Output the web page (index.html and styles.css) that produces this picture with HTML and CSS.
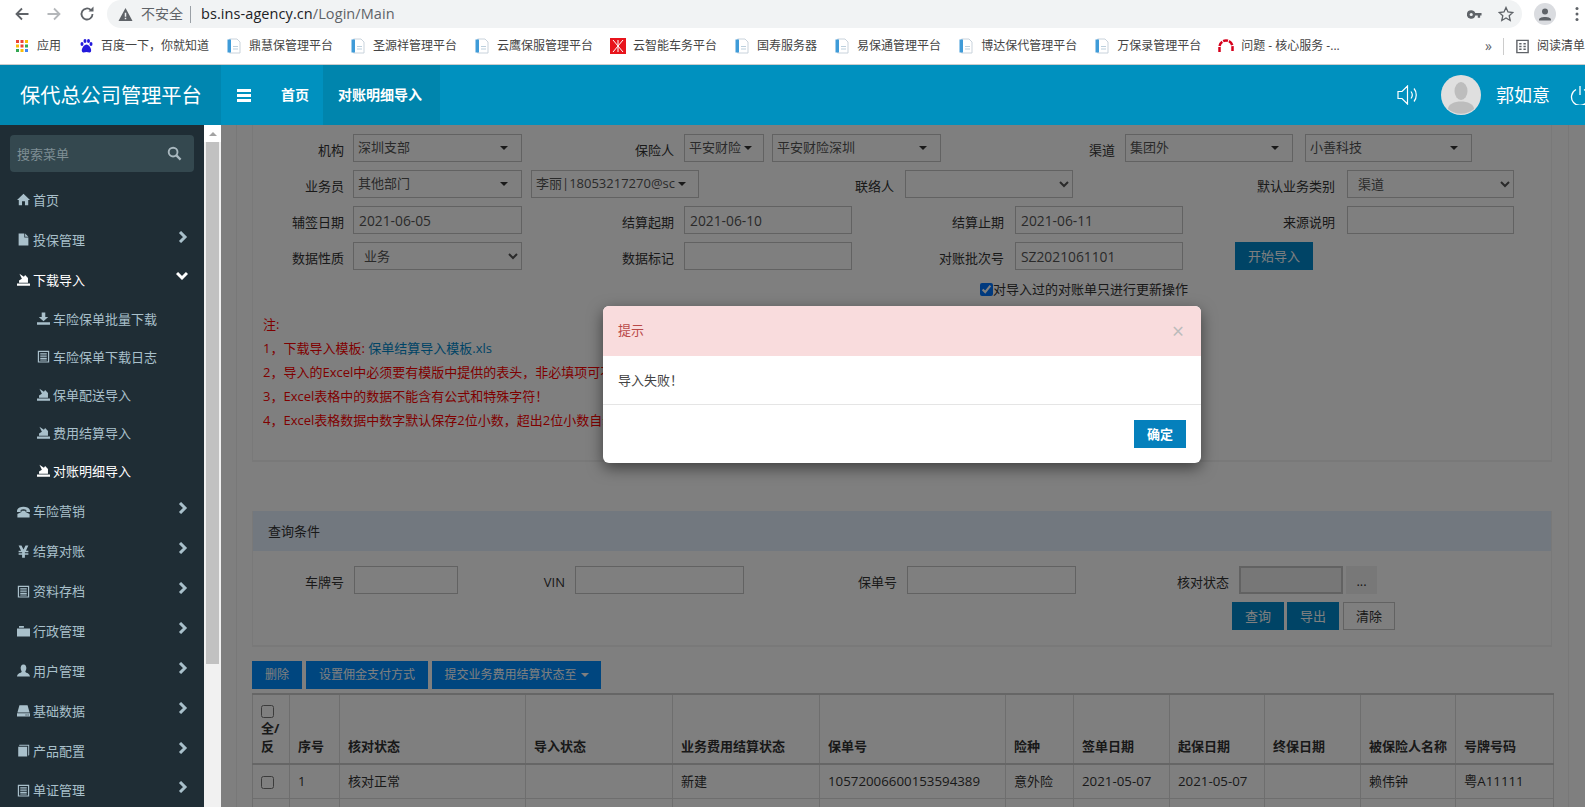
FILE: index.html
```html
<!DOCTYPE html>
<html lang="zh-CN">
<head>
<meta charset="utf-8">
<title>保代总公司管理平台</title>
<link rel="stylesheet" href="styles.css">
</head>
<body>
<svg class="sprite" xmlns="http://www.w3.org/2000/svg">
  <symbol id="i-home" viewBox="0 0 16 16"><path d="M8 1 16 8.500H13.800V15H9.800V10.200H6.200V15H2.200V8.500H0Z"/></symbol>
  <symbol id="i-file" viewBox="0 0 16 16"><path d="M2 .5H9V5.500H14V15.500H2ZM10 .5 14 4.500H10Z"/></symbol>
  <symbol id="i-import" viewBox="0 0 16 16"><path d="M0 13H16V15.800H0ZM2.500 12V9.300L6 7 3 1 8.500 4.500 10 2.500 13.500 6V12Z"/></symbol>
  <symbol id="i-down" viewBox="0 0 16 16"><path d="M5.800 .5H10.200V6H13.800L8 11.500 2.200 6H5.800ZM0 12.500H16V15.800H0Z"/></symbol>
  <symbol id="i-list" viewBox="0 0 16 16"><path fill-rule="evenodd" d="M1 1H15V15.500H1ZM2.500 2.500V14H13.500V2.500Z"/><path d="M4 4H12V5.500H4ZM4 6.800H12V8.300H4ZM4 9.500H12V11H4ZM4 11.800H12V13H4Z"/></symbol>
  <symbol id="i-phone" viewBox="0 0 16 16"><path d="M0 7.500C0 .5 16 .5 16 7.500V8.500H11.500V6C9.500 5 6.500 5 4.500 6V8.500H0ZM5.500 7H10.500V8.500L15.500 11V15.500H.5V11L5.500 8.500Z"/></symbol>
  <symbol id="i-yen" viewBox="0 0 16 16"><path d="M2 .5H5.500L8 5.500 10.500 .5H14L11 7H14V9H9.700V10H14V12H9.700V15.800H6.300V12H2V10H6.300V9H2V7H5Z"/></symbol>
  <symbol id="i-folder" viewBox="0 0 16 16"><path d="M0 5.500H16V15.500H0ZM2.500 2.500H8.500V4.500H2.500Z"/></symbol>
  <symbol id="i-user" viewBox="0 0 16 16"><path d="M8 .5C10.800 .5 11.500 3 11.500 5 11.500 7 10.400 8.500 10.200 9.800 11.500 11 15.500 11.200 16 15.500H0C.5 11.200 4.500 11 5.800 9.800 5.600 8.500 4.500 7 4.500 5 4.500 3 5.200 .5 8 .5Z"/></symbol>
  <symbol id="i-hdd" viewBox="0 0 16 16"><path fill-rule="evenodd" d="M3 1.500H13L15.500 10.500H.5ZM0 11.500H16V15.500H0ZM10.500 12.800V14H11.800V12.800ZM13 12.800V14H14.300V12.800Z"/></symbol>
  <symbol id="i-book" viewBox="0 0 16 16"><path d="M1.500 3.500H12.500V15.500H1.500ZM3 1H15V13.500L13.800 14.500V2.300H2.500Z"/></symbol>
  <symbol id="i-doc" viewBox="0 0 16 16"><path fill="#fff" stroke="#c9d3dc" d="M3.500 1H11L14 4V15H3.500Z"/><path fill="#3f9bd8" d="M1.500 1.500H5V14.500H1.500Z"/><path fill="#bcd0de" d="M7 8H12V9H7ZM7 10.500H12V11.500H7Z"/></symbol>
</svg>

<div class="tabbar">
  <svg class="tb-ico" viewBox="0 0 16 16"><path class="ln" d="M14.500 8H2.500M8 2.500 2.500 8 8 13.500"/></svg>
  <svg class="tb-ico fwd" viewBox="0 0 16 16"><path class="ln" d="M1.500 8H13.500M8 2.500 13.500 8 8 13.500"/></svg>
  <svg class="tb-ico" viewBox="0 0 16 16"><path class="ln" d="M13.500 8A5.500 5.500 0 1 1 11.800 4"/><path class="fl" d="M9.500 5.500H14.500V.5Z"/></svg>
  <div class="omni">
    <svg class="warn" viewBox="0 0 16 16"><path d="M8 1 15.500 15H.5ZM7.200 6V10.500H8.800V6ZM7.200 11.500V13H8.800V11.500Z" fill-rule="evenodd"/></svg>
    <span class="insecure">不安全</span>
    <span class="omni-sep"></span>
    <span class="url">bs.ins-agency.cn<span class="url-path">/Login/Main</span></span>
    <svg class="omni-key" viewBox="0 0 16 16"><path d="M4.500 3.500A4.500 4.500 0 0 1 8.800 6.500H15.500V9H14V11.500H11.500V9H8.800A4.500 4.500 0 1 1 4.500 3.500ZM4.500 6.300A1.700 1.700 0 1 0 4.500 9.700 1.700 1.700 0 0 0 4.500 6.300Z" fill-rule="evenodd"/></svg>
    <svg class="omni-star" viewBox="0 0 16 16"><path d="M8 1.500 10 6 14.800 6.500 11.200 9.700 12.200 14.500 8 12 3.800 14.500 4.800 9.700 1.200 6.500 6 6Z"/></svg>
  </div>
  <svg class="profile" viewBox="0 0 22 22"><circle cx="11" cy="11" r="11" fill="#dadce0"/><circle cx="11" cy="8.500" r="3" fill="#5f6368"/><path d="M5 16.500C5 13 17 13 17 16.500V17.500H5Z" fill="#5f6368"/></svg>
  <svg class="dots" viewBox="0 0 4 16"><circle cx="2" cy="2.500" r="1.500"/><circle cx="2" cy="8" r="1.500"/><circle cx="2" cy="13.500" r="1.500"/></svg>
</div>

<div class="bookmarks">
  <span class="bm bm-first">
    <svg class="bm-ico" viewBox="0 0 16 16"><path fill="#ea4335" d="M2 2H5V5H2ZM6.500 2H9.500V5H6.500Z"/><path fill="#fbbc05" d="M11 2H14V5H11ZM2 6.500H5V9.500H2Z"/><path fill="#ea4335" d="M6.500 6.500H9.500V9.500H6.500Z"/><path fill="#34a853" d="M11 6.500H14V9.500H11ZM2 11H5V14H2Z"/><path fill="#fbbc05" d="M6.500 11H9.500V14H6.500Z"/><path fill="#4285f4" d="M11 11H14V14H11Z"/></svg>
    应用</span>
  <span class="bm">
    <svg class="bm-ico" viewBox="0 0 16 16"><g fill="#2319dc"><ellipse cx="4" cy="6" rx="1.500" ry="2"/><ellipse cx="7" cy="3" rx="1.500" ry="2"/><ellipse cx="10.500" cy="3" rx="1.500" ry="2"/><ellipse cx="13" cy="6" rx="1.500" ry="2"/><path d="M8.500 6.500C11 6.500 14 11 13 13.500 12 15.500 10 14 8.500 14 7 14 5 15.500 4 13.500 3 11 6 6.500 8.500 6.500Z"/></g></svg>
    百度一下，你就知道</span>
  <span class="bm"><svg class="bm-ico"><use href="#i-doc"/></svg>鼎慧保管理平台</span>
  <span class="bm"><svg class="bm-ico"><use href="#i-doc"/></svg>圣源祥管理平台</span>
  <span class="bm"><svg class="bm-ico"><use href="#i-doc"/></svg>云鹰保服管理平台</span>
  <span class="bm">
    <svg class="bm-ico" viewBox="0 0 16 16"><rect width="16" height="16" fill="#e8141c"/><path d="M3 2 13 14M13 2 3 14M8 2V14" stroke="#fff" stroke-width="1" fill="none"/></svg>
    云智能车务平台</span>
  <span class="bm"><svg class="bm-ico"><use href="#i-doc"/></svg>国寿服务器</span>
  <span class="bm"><svg class="bm-ico"><use href="#i-doc"/></svg>易保通管理平台</span>
  <span class="bm"><svg class="bm-ico"><use href="#i-doc"/></svg>博达保代管理平台</span>
  <span class="bm"><svg class="bm-ico"><use href="#i-doc"/></svg>万保录管理平台</span>
  <span class="bm">
    <svg class="bm-ico" viewBox="0 0 16 16"><path d="M1.500 14V9A6.500 6.500 0 0 1 14.500 9V14" fill="none" stroke="#d6001c" stroke-width="2.500" stroke-dasharray="5 1"/></svg>
    问题 - 核心服务 -...</span>
  <div class="bm-end">
    <span class="bm-more">»</span>
    <span class="bm-sep"></span>
    <svg class="bm-ico bm-read" viewBox="0 0 16 16"><path fill="none" stroke="#5f6368" stroke-width="1.500" d="M2 1.500H14V14.500H2ZM4.500 5H7M9 5H11.500M4.500 8H7M9 8H11.500M4.500 11H7M9 11H11.500"/></svg>
    <span class="bm-label">阅读清单</span>
  </div>
</div>

<header class="app-header">
  <div class="brand">保代总公司管理平台</div>
  <div class="hamb"><span></span><span></span><span></span></div>
  <a class="hd-tab">首页</a>
  <a class="hd-tab active">对账明细导入</a>
  <div class="hd-right">
    <svg class="speaker" viewBox="0 0 22 20"><path d="M1 6.500H5L10.500 1V19L5 13.500H1ZM14 6.500C15.500 8.500 15.500 11.500 14 13.500M17 3.500C20 7 20 13 17 16.500" fill="none" stroke="#fff" stroke-width="1.200"/></svg>
    <svg class="avatar" viewBox="0 0 40 40"><circle cx="20" cy="20" r="20" fill="#dfdfdf"/><ellipse cx="20" cy="16" rx="6.500" ry="9" fill="#bdbdbd"/><path d="M7 34C7 24 33 24 33 34A20 20 0 0 1 7 34Z" fill="#bdbdbd"/></svg>
    <span class="uname">郭如意</span>
    <svg class="power" viewBox="0 0 20 20"><path d="M6 4.500A8.500 8.500 0 1 0 14 4.500M10 1V10" fill="none" stroke="#fff" stroke-width="1.300"/></svg>
  </div>
</header>

<div class="app-body">
  <aside class="sidebar">
    <div class="search"><span>搜索菜单</span>
      <svg class="search-ico" viewBox="0 0 16 16"><circle cx="6.500" cy="6.500" r="4.700" fill="none" stroke="#a9b8bf" stroke-width="2"/><path d="M10 10 14.500 14.500" stroke="#a9b8bf" stroke-width="2.400"/></svg>
    </div>
    <nav class="nav">
      <a class="nav-item"><svg class="nav-ico"><use href="#i-home"/></svg>首页</a>
      <a class="nav-item"><svg class="nav-ico"><use href="#i-file"/></svg>投保管理<svg class="chev" viewBox="0 0 10 12"><path d="M2 1 7 6 2 11"/></svg></a>
      <a class="nav-item on"><svg class="nav-ico"><use href="#i-import"/></svg>下载导入<svg class="chev chev-down" viewBox="0 0 12 10"><path d="M1 2 6 7 11 2"/></svg></a>
      <div class="sub">
        <a class="sub-item"><svg class="nav-ico"><use href="#i-down"/></svg>车险保单批量下载</a>
        <a class="sub-item"><svg class="nav-ico"><use href="#i-list"/></svg>车险保单下载日志</a>
        <a class="sub-item"><svg class="nav-ico"><use href="#i-import"/></svg>保单配送导入</a>
        <a class="sub-item"><svg class="nav-ico"><use href="#i-import"/></svg>费用结算导入</a>
        <a class="sub-item on"><svg class="nav-ico"><use href="#i-import"/></svg>对账明细导入</a>
      </div>
      <a class="nav-item"><svg class="nav-ico"><use href="#i-phone"/></svg>车险营销<svg class="chev" viewBox="0 0 10 12"><path d="M2 1 7 6 2 11"/></svg></a>
      <a class="nav-item"><svg class="nav-ico"><use href="#i-yen"/></svg>结算对账<svg class="chev" viewBox="0 0 10 12"><path d="M2 1 7 6 2 11"/></svg></a>
      <a class="nav-item"><svg class="nav-ico"><use href="#i-list"/></svg>资料存档<svg class="chev" viewBox="0 0 10 12"><path d="M2 1 7 6 2 11"/></svg></a>
      <a class="nav-item"><svg class="nav-ico"><use href="#i-folder"/></svg>行政管理<svg class="chev" viewBox="0 0 10 12"><path d="M2 1 7 6 2 11"/></svg></a>
      <a class="nav-item"><svg class="nav-ico"><use href="#i-user"/></svg>用户管理<svg class="chev" viewBox="0 0 10 12"><path d="M2 1 7 6 2 11"/></svg></a>
      <a class="nav-item"><svg class="nav-ico"><use href="#i-hdd"/></svg>基础数据<svg class="chev" viewBox="0 0 10 12"><path d="M2 1 7 6 2 11"/></svg></a>
      <a class="nav-item"><svg class="nav-ico"><use href="#i-book"/></svg>产品配置<svg class="chev" viewBox="0 0 10 12"><path d="M2 1 7 6 2 11"/></svg></a>
      <a class="nav-item"><svg class="nav-ico"><use href="#i-list"/></svg>单证管理<svg class="chev" viewBox="0 0 10 12"><path d="M2 1 7 6 2 11"/></svg></a>
    </nav>
  </aside>
  <div class="side-scroll">
    <div class="ss-up"><span></span></div>
    <div class="ss-thumb"></div>
  </div>

  <main class="main">
    <div class="wrap">
      <section class="panel panel-import">
        <div class="row">
          <label class="lbl w92">机构</label>
          <div class="dd w169 ml9"><span>深圳支部</span><i class="caret caret-far"></i></div>
          <label class="lbl w152">保险人</label>
          <div class="dd w80 ml10"><span>平安财险</span><i class="caret"></i></div>
          <div class="dd w169 ml8"><span>平安财险深圳</span><i class="caret caret-far"></i></div>
          <label class="lbl w174">渠道</label>
          <div class="dd w168 ml10"><span>集团外</span><i class="caret caret-far"></i></div>
          <div class="dd w167 ml12"><span>小善科技</span><i class="caret caret-far"></i></div>
        </div>
        <div class="row">
          <label class="lbl w92">业务员</label>
          <div class="dd w169 ml9"><span>其他部门</span><i class="caret caret-far"></i></div>
          <div class="dd w168 ml9"><span>李丽|18053217270@sc</span><i class="caret"></i></div>
          <label class="lbl w195">联络人</label>
          <select class="sel w168 ml11"><option></option></select>
          <label class="lbl w262">默认业务类别</label>
          <select class="sel w167 ml12"><option>渠道</option></select>
        </div>
        <div class="row">
          <label class="lbl w92">辅签日期</label>
          <input class="ipt w169 ml9" value="2021-06-05">
          <label class="lbl w152">结算起期</label>
          <input class="ipt w168 ml10" value="2021-06-10">
          <label class="lbl w152">结算止期</label>
          <input class="ipt w168 ml11" value="2021-06-11">
          <label class="lbl w152">来源说明</label>
          <input class="ipt w167 ml12">
        </div>
        <div class="row">
          <label class="lbl w92">数据性质</label>
          <select class="sel w169 ml9"><option>业务</option></select>
          <label class="lbl w152">数据标记</label>
          <input class="ipt w168 ml10">
          <label class="lbl w152">对账批次号</label>
          <input class="ipt w168 ml11" value="SZ2021061101">
          <button class="btn btn-primary w78 ml52">开始导入</button>
        </div>
        <div class="check-row"><input type="checkbox" checked><span>对导入过的对账单只进行更新操作</span></div>
        <div class="notes">
          <p>注:</p>
          <p>1，下载导入模板: <a class="link">保单结算导入模板.xls</a></p>
          <p>2，导入的Excel中必须要有模版中提供的表头，非必填项可不填</p>
          <p>3，Excel表格中的数据不能含有公式和特殊字符！</p>
          <p>4，Excel表格数据中数字默认保存2位小数，超出2位小数自动处理</p>
        </div>
      </section>

      <section class="panel panel-query">
        <div class="panel-head">查询条件</div>
        <div class="query-body">
          <div class="row row-q">
            <label class="lbl w92">车牌号</label>
            <input class="ipt w104 ml10">
            <label class="lbl w107">VIN</label>
            <input class="ipt w169 ml10">
            <label class="lbl w153">保单号</label>
            <input class="ipt w169 ml10">
            <label class="lbl w153">核对状态</label>
            <input class="ipt ipt-off w104 ml10" disabled>
            <button class="btn btn-more ml3">...</button>
          </div>
          <div class="btn-row">
            <button class="btn btn-primary w52">查询</button>
            <button class="btn btn-primary w52">导出</button>
            <button class="btn btn-plain w52">清除</button>
          </div>
        </div>
      </section>

      <div class="toolbar">
        <button class="btn btn-batch w50">删除</button>
        <button class="btn btn-batch w122">设置佣金支付方式</button>
        <button class="btn btn-batch w169">提交业务费用结算状态至 <i class="caret caret-light"></i></button>
      </div>

      <table class="grid">
        <colgroup>
          <col class="c37"><col class="c50"><col class="c186"><col class="c147"><col class="c147"><col class="c186">
          <col class="c68"><col class="c96"><col class="c95"><col class="c96"><col class="c95"><col class="c98">
        </colgroup>
        <thead>
          <tr>
            <th><input type="checkbox" class="th-check">全/反</th>
            <th>序号</th><th>核对状态</th><th>导入状态</th><th>业务费用结算状态</th><th>保单号</th>
            <th>险种</th><th>签单日期</th><th>起保日期</th><th>终保日期</th><th>被保险人名称</th><th>号牌号码</th>
          </tr>
        </thead>
        <tbody>
          <tr>
            <td><input type="checkbox"></td>
            <td>1</td><td>核对正常</td><td></td><td>新建</td><td class="num">10572006600153594389</td>
            <td>意外险</td><td class="num">2021-05-07</td><td class="num">2021-05-07</td><td></td><td>赖伟钟</td><td class="num">粤A11111</td>
          </tr>
          <tr class="blank"><td></td><td></td><td></td><td></td><td></td><td></td><td></td><td></td><td></td><td></td><td></td><td></td></tr>
        </tbody>
      </table>
    </div>

    <div class="backdrop"></div>
    <div class="modal">
      <div class="modal-head"><span>提示</span><span class="modal-x">×</span></div>
      <div class="modal-body">导入失败！</div>
      <div class="modal-foot"><button class="btn btn-ok">确定</button></div>
    </div>
  </main>
</div>
</body>
</html>
```
FILE: styles.css
```css
* { box-sizing: border-box; }
html, body { margin: 0; padding: 0; height: 807px; overflow: hidden; background: #fff; }
body { font: 13px/20px "Open Sans", "Noto Sans CJK SC", sans-serif; color: #333; }
.sprite { display: none; }

/* browser chrome */
.tabbar { height: 28px; display: flex; align-items: center; padding-left: 14px; background: #fff; }
.tb-ico { width: 16px; height: 16px; margin-right: 17px; flex: none; }
.tb-ico .ln { fill: none; stroke: #5f6368; stroke-width: 1.8; }
.tb-ico .fl { fill: #5f6368; }
.tb-ico.fwd { margin-left: -1px; }
.tb-ico.fwd .ln { stroke: #b4b7ba; }
.omni { margin-left: -5px; width: 1415px; height: 28px; border-radius: 14px; background: #f1f3f4; display: flex; align-items: center; padding-left: 11px; flex: none; }
.warn { width: 15px; height: 15px; fill: #5f6368; flex: none; }
.insecure { margin-left: 8px; font-size: 14px; color: #5f6368; }
.omni-sep { width: 1px; height: 17px; background: #9aa0a6; margin: 0 10px 0 7px; }
.url { font-size: 14.500px; color: #202124; letter-spacing: .08px; }
.url-path { color: #5f6368; }
.omni-key { width: 15px; height: 15px; fill: #5f6368; margin-left: auto; flex: none; }
.omni-star { width: 16px; height: 16px; fill: none; stroke: #5f6368; stroke-width: 1.300; margin: 0 8px 0 16px; flex: none; }
.profile { width: 22px; height: 22px; margin-left: 12px; flex: none; }
.dots { width: 4px; height: 16px; margin-left: 19px; fill: #5f6368; flex: none; }

.bookmarks { height: 37px; display: flex; align-items: center; gap: 17px; padding: 0 0 1px 14px; background: #fff; border-bottom: 1px solid #ccc; font-size: 12px; color: #444; overflow: hidden; white-space: nowrap; }
.bm { display: flex; align-items: center; flex: none; }
.bm-ico { width: 16px; height: 16px; margin-right: 7px; flex: none; fill: currentColor; }
.bm-end { position: absolute; left: 1485px; right: 0; top: 28px; height: 36px; display: flex; align-items: center; overflow: hidden; background: #fff; }
.bm-more { width: 18px; font-size: 14px; color: #5f6368; flex: none; }
.bm-sep { width: 1px; height: 17px; background: #ccc; flex: none; margin-right: 11px; }
.bm-read { width: 15px; height: 15px; }
.bm-label { flex: none; }

/* app header */
.app-header { height: 60px; display: flex; align-items: stretch; background: #0091bf; color: #fff; overflow: hidden; white-space: nowrap; }
.brand { width: 221px; flex: none; background: #0086b0; font-size: 20.200px; display: flex; align-items: center; padding-left: 20px; }
.hamb { width: 60px; flex: none; display: flex; flex-direction: column; justify-content: center; gap: 2px; padding-left: 16px; }
.hamb span { display: block; width: 14px; height: 3px; background: #fff; }
.hd-tab { font-size: 14px; font-weight: 700; display: flex; align-items: center; flex: none; }
.hd-tab:not(.active) { width: 42px; }
.hd-tab.active { width: 117px; padding-left: 15px; background: #0085ad; }
.hd-right { flex: none; margin-left: 957px; display: flex; align-items: center; }
.speaker { width: 22px; height: 20px; flex: none; }
.avatar { width: 40px; height: 40px; margin-left: 22px; flex: none; }
.uname { font-size: 18px; margin-left: 15px; }
.power { width: 20px; height: 20px; margin-left: 20px; flex: none; }

/* body */
.app-body { height: 682px; display: flex; }
.sidebar { width: 204px; flex: none; background: #1f2d35; padding-top: 10px; overflow: hidden; color: #a9c0cb; }
.search { height: 37px; margin: 0 10px; padding: 0 12px 0 7px; background: #34484f; border-radius: 4px; display: flex; align-items: center; justify-content: space-between; color: #7f8f95; }
.search-ico { width: 15px; height: 15px; flex: none; }
.nav { display: block; margin-top: 8px; }
.nav-item { height: 39.850px; display: flex; align-items: center; padding: 0 16px 0 17px; }
.nav-item.on, .sub-item.on { color: #fff; }
.nav-ico { width: 13px; height: 13px; margin-right: 3px; fill: currentColor; flex: none; }
.chev { width: 10px; height: 12px; margin-left: auto; margin-bottom: 6px; fill: none; stroke: currentColor; stroke-width: 3; flex: none; }
.chev-down { width: 12px; height: 10px; margin-bottom: 8px; }
.sub { padding-bottom: 2px; }
.sub-item { height: 38px; display: flex; align-items: center; padding-left: 37px; }

.side-scroll { width: 17px; flex: none; background: #f1f1f1; }
.ss-up { height: 17px; background: #fff; display: flex; justify-content: center; align-items: center; }
.ss-up span { width: 0; height: 0; border: 4px solid transparent; border-bottom: 4px solid #a3a3a3; border-top: 0; }
.ss-thumb { width: 13px; height: 522px; margin-left: 2px; background: #c1c1c1; }

.main { flex: 1; position: relative; overflow: hidden; background: #fff; }
.wrap { height: 100%; margin: 0 16px 0 15px; padding: 0 16px 0 15px; border: solid #f0f0f0; border-width: 0 1px; }

.panel { border: solid #f2f2f2; border-width: 0 1px 2px; background: #fff; }
.panel-import { padding: 9px 0 28px; }
.panel-query { margin-top: 49px; }
.panel-head { height: 40px; line-height: 40px; padding-left: 15px; background: #e4f0ff; color: #333; }
.query-body { padding: 15px 0; }

.row { display: flex; align-items: center; height: 28px; margin-bottom: 8px; margin-left: -1px; white-space: nowrap; }
.lbl { text-align: right; padding-top: 4px; flex: none; color: #333; }
.ipt, .sel, .dd { height: 28px; border: 1px solid #c5c5c5; background: #fff; flex: none; border-radius: 0; color: #555; font: 13.800px/26px "Open Sans", "Noto Sans CJK SC", sans-serif; margin: 0; }
.ipt { padding: 0 5px; }
.ipt-off { background: #eee; border-width: 2px; }
.sel { padding: 0 6px; font-size: 13px; }
.dd { display: flex; align-items: center; padding: 0 0 0 4px; overflow: hidden; font-size: 13px; }
.dd span { overflow: hidden; white-space: nowrap; padding-bottom: 2px; }
.caret { display: block; flex: none; width: 0; height: 0; border: 4px solid transparent; border-top: 4px solid #333; border-bottom: 0; margin: 0 0 0 3px; }
.caret-far { margin: 0 13px 0 auto; }
.caret-light { display: inline-block; border-top-color: #fff; margin: 0 0 2px 1px; vertical-align: middle; }

.w50 { width: 50px; } .w52 { width: 52px; } .w78 { width: 78px; } .w80 { width: 80px; }
.w92 { width: 92px; } .w104 { width: 104px; } .w107 { width: 107px; } .w122 { width: 122px; }
.w152 { width: 152px; } .w153 { width: 153px; } .w167 { width: 167px; }
.w168 { width: 168px; } .w169 { width: 169px; } .w174 { width: 174px; } .w195 { width: 195px; } .w262 { width: 262px; }
.ml3 { margin-left: 3px; } .ml8 { margin-left: 8px; } .ml9 { margin-left: 9px; } .ml10 { margin-left: 10px; }
.ml11 { margin-left: 11px; } .ml12 { margin-left: 12px; } .ml52 { margin-left: 52px; }

.btn { height: 28px; border: 0; border-radius: 0; padding: 0; font: 13px/28px "Open Sans", "Noto Sans CJK SC", sans-serif; flex: none; cursor: default; }
.btn-primary { background: #0088cc; color: #fff; }
.btn-batch { background: #008cff; color: #fff; font-size: 12px; }
.btn-plain { background: #fff; color: #333; border: 1px solid #c5c5c5; line-height: 26px; }
.btn-more { width: 31px; background: #f0f0f0; color: #333; line-height: 30px; }

.check-row { height: 20px; padding-top: 2px; display: flex; align-items: center; margin-left: 727px; white-space: nowrap; }
.check-row input { width: 13px; height: 13px; margin: 0; }
.notes { margin: 14px 0 0 10px; color: #f00; line-height: 24px; white-space: nowrap; overflow: hidden; }
.notes p { margin: 0; }
.link { color: #0088cc; }

.btn-row { display: flex; gap: 3px; margin: 0 0 0 979px; }
.btn-row .btn-plain { margin-left: 1px; }

.toolbar { display: flex; gap: 4px; margin-top: 14px; }
.grid { width: 1301px; margin-top: 4px; border-collapse: collapse; table-layout: fixed; border-top: 2px solid #ccc; }
.grid th, .grid td { border: 1px solid #ddd; padding: 8px 8px; text-align: left; line-height: 18px; color: #333; }
.grid th { vertical-align: bottom; font-weight: 700; height: 70px; border-bottom-width: 2px; border-bottom-color: #ccc; border-top: 0; }
.grid td { height: 34px; padding-top: 7px; padding-bottom: 7px; vertical-align: middle; white-space: nowrap; overflow: hidden; }
.grid input { margin: 0; width: 13px; height: 13px; vertical-align: middle; }
.th-check { display: block; margin-bottom: 1px !important; }
.num { font-size: 13.300px; }
.c37 { width: 37px; } .c50 { width: 50px; } .c68 { width: 68px; } .c95 { width: 95px; } .c96 { width: 96px; }
.c98 { width: 98px; } .c147 { width: 147px; } .c186 { width: 186px; }

.backdrop { position: absolute; inset: 0; background: rgba(0, 0, 0, .5); }
.modal { position: absolute; top: 181px; left: 0; right: 2px; margin: 0 auto; width: 598px; height: 157px; background: #fff; border-radius: 6px; box-shadow: 0 5px 15px rgba(0, 0, 0, .5); overflow: hidden; }
.modal-head { height: 50px; background: #f9dcdd; color: #b94a48; display: flex; justify-content: space-between; align-items: center; padding: 0 15px 2px; }
.modal-x { font-size: 21px; color: #bbb; line-height: 21px; padding-top: 3px; padding-right: 2px; }
.modal-body { height: 48px; padding: 0 15px; line-height: 48px; color: #444; }
.modal-foot { border-top: 1px solid #e5e5e5; padding: 15px 15px 0; text-align: right; }
.btn-ok { width: 52px; background: #0580bc; color: #fff; font-weight: 700; display: inline-block; }
```
